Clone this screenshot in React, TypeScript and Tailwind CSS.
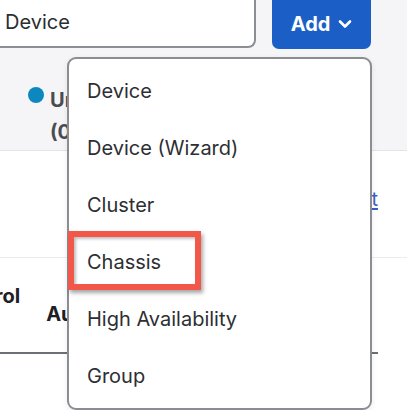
// App.tsx — Add menu dropdown, Chassis option highlighted

const ITEMS = ["Device", "Device (Wizard)", "Cluster", "Chassis", "High Availability", "Group"];

function Chevron() {
  return (
    <svg width="14" height="10" viewBox="0 0 14 10" fill="none">
      <path d="M2 2.5 L7 7.5 L12 2.5" stroke="white" strokeWidth="2.6" strokeLinecap="round" strokeLinejoin="round" />
    </svg>
  );
}

export default function App() {
  return (
    <div
      className="relative w-[407px] h-[410px] overflow-hidden bg-white"
      style={{ fontFamily: "Inter, 'Noto Sans', sans-serif" }}
    >
      {/* top toolbar area */}
      <div className="h-[151px] bg-[#f5f5f7] border-b border-[#e3e4e8]">
        <div className="flex items-start">
          <div className="w-[260px] h-[48px] -ml-[4px] bg-white border-2 border-[#8b8e92] border-t-0 rounded-br-[8px] flex items-center pl-[7px] pb-[2px]">
            <span className="text-[20px] text-[#2b2d31]">Device</span>
          </div>
          <button className="ml-[16px] w-[99px] h-[49px] bg-[#1b5fc6] rounded-b-[7px] flex items-center justify-center gap-[8px] pb-[2px]">
            <span className="text-[20px] font-bold text-white">Add</span>
            <Chevron />
          </button>
        </div>
        <div className="flex items-start pl-[28px] pt-[34px] gap-[6px]">
          <span className="w-[16px] h-[16px] mt-[4px] rounded-full bg-[#0d88bf]" />
          <div className="text-[20px] font-bold text-[#4a4c50] leading-[34px]">
            <div>Unmanaged</div>
            <div className="-mt-[2px]">(0)</div>
          </div>
        </div>
      </div>

      {/* page content below */}
      <div className="relative">
        <div className="flex justify-end pr-[29px] pt-[33px]">
          <span className="text-[20px] text-[#3d5fc2] underline underline-offset-2">Edit</span>
        </div>
        <div className="mt-[43px] border-t border-[#ececf0]" />
        <div className="flex items-start pt-[26px] h-[96px] w-[378px] border-b-2 border-[#6c6f74]">
          <span className="text-[20px] font-bold text-[#1f2024] -ml-[52px] leading-[24px]">Control</span>
          <span className="ml-[26px] mt-[18px] text-[20px] font-bold text-[#1f2024] leading-[24px]">Auto</span>
        </div>
      </div>

      {/* dropdown menu */}
      <div className="absolute left-[67px] top-[57px] w-[305px] h-[353px] bg-white border-2 border-[#8a8d91] rounded-[9px] pt-[3px] shadow-[0_2px_6px_rgba(0,0,0,0.08)]">
        {ITEMS.map((item) => (
          <div key={item} className="h-[57px] flex items-center pl-[18px] text-[20px] text-[#2d2f33]">
            {item}
          </div>
        ))}
      </div>

      {/* callout box around Chassis */}
      <div className="absolute left-[68px] top-[231px] w-[133px] h-[59px] border-[6px] border-[#f2584a] shadow-[2px_3px_4px_rgba(0,0,0,0.35),inset_2px_2px_3px_rgba(0,0,0,0.25)]" />
    </div>
  );
}
